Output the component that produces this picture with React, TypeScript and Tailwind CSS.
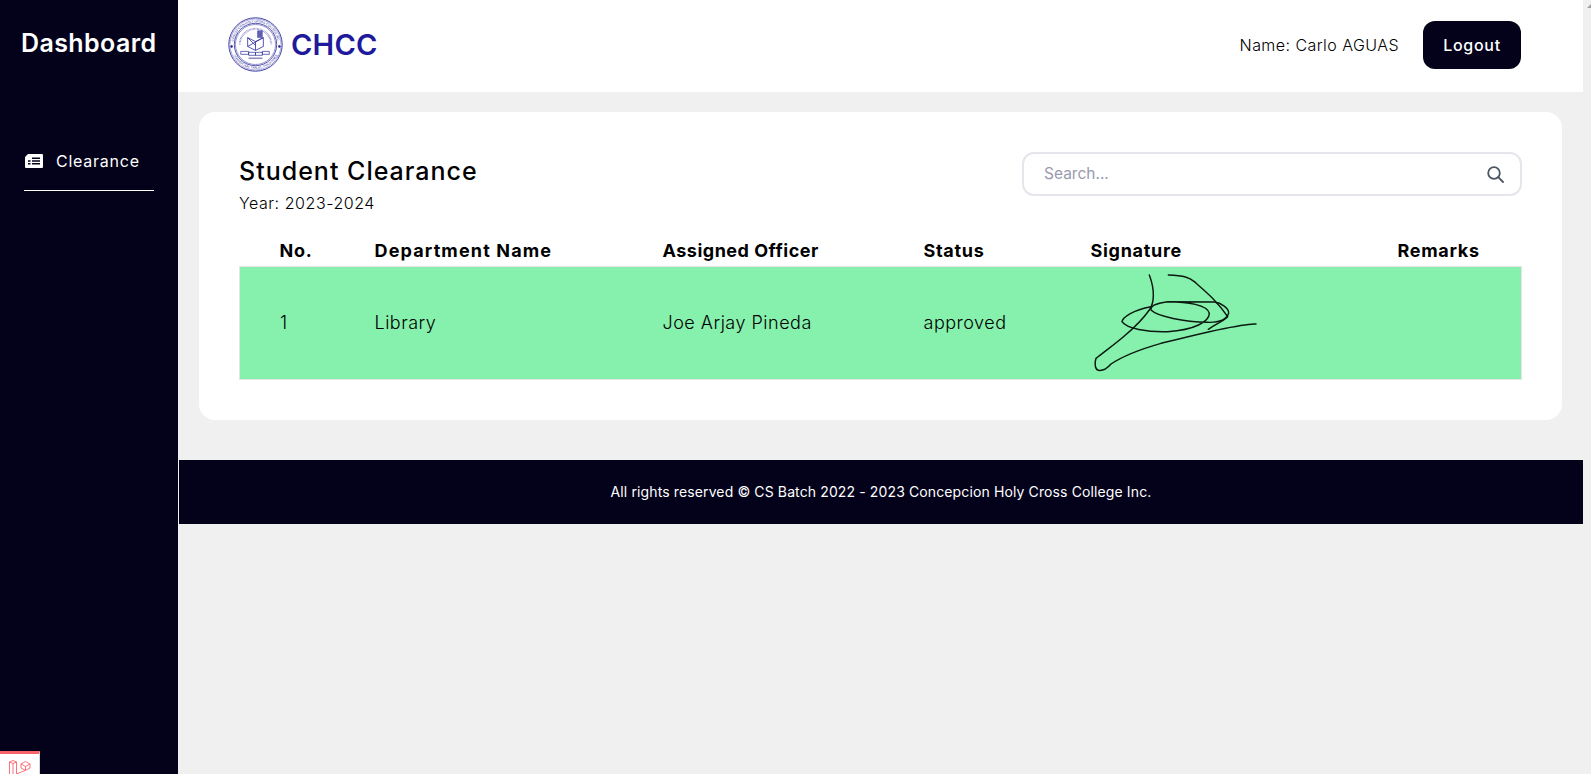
const navy = 'bg-[#03021a]'

function Seal() {
  return (
    <svg viewBox="0 0 56 56" className="-mt-[2px] h-[55px] w-[55px] shrink-0" fill="none" stroke="#2a2a9c">
      <defs>
        <path id="sealTop" d="M5.5 30 A22.6 22.6 0 1 1 50.5 30" />
        <path id="sealBottom" d="M3.2 32 A25.2 25.2 0 0 0 52.8 32" />
      </defs>
      <circle cx="28" cy="28" r="27.2" strokeWidth="0.9" />
      <circle cx="28" cy="28" r="26" strokeWidth="0.4" />
      <circle cx="28" cy="28" r="21.6" strokeWidth="0.8" />
      <circle cx="28" cy="28" r="20.4" strokeWidth="0.5" />
      <text fill="#2a2a9c" stroke="none" fontSize="3.1" fontFamily="'Liberation Sans', sans-serif">
        <textPath href="#sealTop" startOffset="50%" textAnchor="middle">CONCEPCION HOLY CROSS COLLEGE INC.</textPath>
      </text>
      <text fill="#2a2a9c" stroke="none" fontSize="3.1" fontFamily="'Liberation Sans', sans-serif">
        <textPath href="#sealBottom" startOffset="50%" textAnchor="middle">CONCEPCION, TARLAC, PHILIPPINES</textPath>
      </text>
      <path d="M12 28 A16 16 0 0 1 44 28" strokeWidth="2" strokeDasharray="0.7 0.7" opacity="0.55" />
      <circle cx="3.7" cy="30" r="0.9" fill="#2a2a9c" />
      <circle cx="52.3" cy="30" r="0.9" fill="#2a2a9c" />
      <path d="M20 21 L28 25 L36 21 L36 30 L28 34 L20 30 Z M28 25 L28 34 M20 30 L36 21 M20 21 L28 29" strokeWidth="0.8" />
      <path d="M30 14 h5 v7 h-5 z" strokeWidth="0.6" fill="#2a2a9c" opacity="0.75" />
      <path d="M13 35 h8 v3 h-8 z M21 36 h7 v3 h-7 z M28 36 h7 v3 h-7 z M35 35 h7 v3 h-7 z" strokeWidth="0.7" />
      <path d="M21 42 h14" strokeWidth="1.6" opacity="0.55" />
    </svg>
  )
}

function Signature() {
  return (
    <svg viewBox="90 21 660 336" className="block h-28 w-[220px]" fill="none" stroke="#0a1a10" strokeWidth="4.4" strokeLinecap="round" strokeLinejoin="round">
      <path d="M265 45 C282 90 280 130 265 150 C240 185 215 207 190 228 C165 250 130 275 105 295 C100 310 102 328 112 331 C125 333 138 326 150 312 C175 295 230 270 300 250 C400 225 480 205 520 200 C550 195 570 190 585 192" />
      <path d="M322 45 C370 47 385 52 400 65 C440 100 470 125 500 170 C500 175 470 190 442 208" />
      <path d="M270 140 C215 150 185 172 183 185 C195 205 260 217 320 215 C400 210 445 185 445 160 C440 135 380 125 320 125 C280 130 268 140 270 150 C290 170 370 185 440 187 C470 188 495 182 503 160 C505 145 480 128 460 126 L320 125" />
    </svg>
  )
}

function LaravelBadge() {
  return (
    <div className="absolute bottom-0 left-0 h-[23px] w-10 overflow-hidden border-t-[3px] border-r border-[#f8636b] border-r-[#d8d8d8] bg-white pt-[6px] pl-[9px]">
      <svg viewBox="0 0 22 14" className="block h-[14px] w-[22px]" fill="none" stroke="#f8636b" strokeWidth="0.9">
        <path d="M0.5 2 L4 0.5 L7.5 2 V14 M0.5 2 V14 M0.5 2 L4 3.5 L7.5 2 M4 3.5 V14" />
        <path d="M12 4 L16.5 1.5 L21 4 V8 L16.5 10.5 L12 8 Z M12 4 L16.5 6.5 L21 4 M16.5 6.5 V10.5 M7.5 14 L16 10.5" />
      </svg>
    </div>
  )
}

export default function App() {
  return (
    <div className="relative flex h-[774px] overflow-hidden bg-[#f0f0f0] font-['Inter','Liberation_Sans',sans-serif] text-black">
      <aside className={`${navy} relative w-[178px] shrink-0 text-white`}>
        <h1 className="pt-[27px] pl-[21px] text-[25px] leading-8 font-semibold tracking-[0.4px]">Dashboard</h1>
        <nav className="mt-[90px] px-6">
          <a className="flex items-center gap-[13px] border-b border-white pb-[17px] pl-[1px]">
            <svg viewBox="0 0 18 14" className="h-[14px] w-[18px]" fill="white">
              <path fillRule="evenodd" d="M3 0 H17 a1 1 0 0 1 1 1 V13 a1 1 0 0 1-1 1 H1 a1 1 0 0 1-1-1 V3 Z M7 3.5 v1.5 h8 v-1.5 Z M7 6.3 v1.5 h8 v-1.5 Z M7 9.1 v1.5 h8 v-1.5 Z M3 6.3 v1.5 h2.5 v-1.5 Z M3 9.1 v1.5 h2.5 v-1.5 Z" />
            </svg>
            <span className="text-base leading-6 font-normal tracking-[0.75px]">Clearance</span>
          </a>
        </nav>
        <LaravelBadge />
      </aside>

      <main className="flex min-w-0 flex-1 flex-col pr-2">
        <header className="flex h-[92px] items-center justify-between bg-white pr-[62px] pb-[2px] pl-[50px]">
          <div className="flex items-center gap-2">
            <Seal />
            <span className="text-[29px] font-semibold tracking-[0.2px] text-[#1f1a9c]">CHCC</span>
          </div>
          <div className="flex items-center gap-6">
            <span className="text-base font-light tracking-[0.45px]">Name: Carlo AGUAS</span>
            <button className={`${navy} h-12 w-[98px] rounded-xl text-base font-medium tracking-[0.7px] text-white`}>Logout</button>
          </div>
        </header>

        <section className="mx-[21px] mt-5 rounded-2xl bg-white px-10 pt-10 pb-10">
          <div className="flex items-start justify-between">
            <div>
              <h2 className="pt-[3px] text-[25px] leading-8 font-medium tracking-[1px]">Student Clearance</h2>
              <p className="mt-1 text-base leading-6 font-light tracking-[0.55px]">Year: 2023-2024</p>
            </div>
            <div className="flex h-11 w-[500px] items-center justify-between rounded-xl border-2 border-[#e5e5ec] pr-4 pl-5">
              <span className="text-[15.5px] text-[#9a9aae]">Search...</span>
              <svg viewBox="0 0 17 17" className="h-[17px] w-[17px]" fill="none" stroke="#4b5563" strokeWidth="1.8" strokeLinecap="round">
                <circle cx="7" cy="7" r="5.8" />
                <path d="M11.2 11.2 L16 16" />
              </svg>
            </div>
          </div>

          <table className="mt-[22px] w-full table-fixed border-collapse text-left">
            <thead>
              <tr className="h-[29px] text-lg font-bold tracking-[0.7px]">
                <th className="w-[135px] pl-10">No.</th>
                <th className="w-[288px] tracking-[1.15px]">Department Name</th>
                <th className="w-[261px] tracking-[0.5px]">Assigned Officer</th>
                <th className="w-[167px]">Status</th>
                <th className="w-[307px]">Signature</th>
                <th>Remarks</th>
              </tr>
            </thead>
            <tbody>
              <tr className="h-[112px] border border-[#e5e5e5] bg-[#86f1ac] text-lg font-light tracking-[0.5px]">
                <td className="pl-10">1</td>
                <td>Library</td>
                <td>Joe Arjay Pineda</td>
                <td>approved</td>
                <td><Signature /></td>
                <td></td>
              </tr>
            </tbody>
          </table>
        </section>

        <footer className={`${navy} mt-10 ml-[1px] flex h-16 items-center justify-center text-sm tracking-[0.12px] text-white`}>
          All rights reserved © CS Batch 2022 - 2023 Concepcion Holy Cross College Inc.
        </footer>
      </main>

      {/* scrollbar arrow peeking in at the corner */}
      <svg viewBox="0 0 4 4" className="absolute top-[4px] right-0 h-1 w-1" fill="#a0a0a0">
        <polygon points="4,0 4,4 0,4" />
      </svg>
    </div>
  )
}
